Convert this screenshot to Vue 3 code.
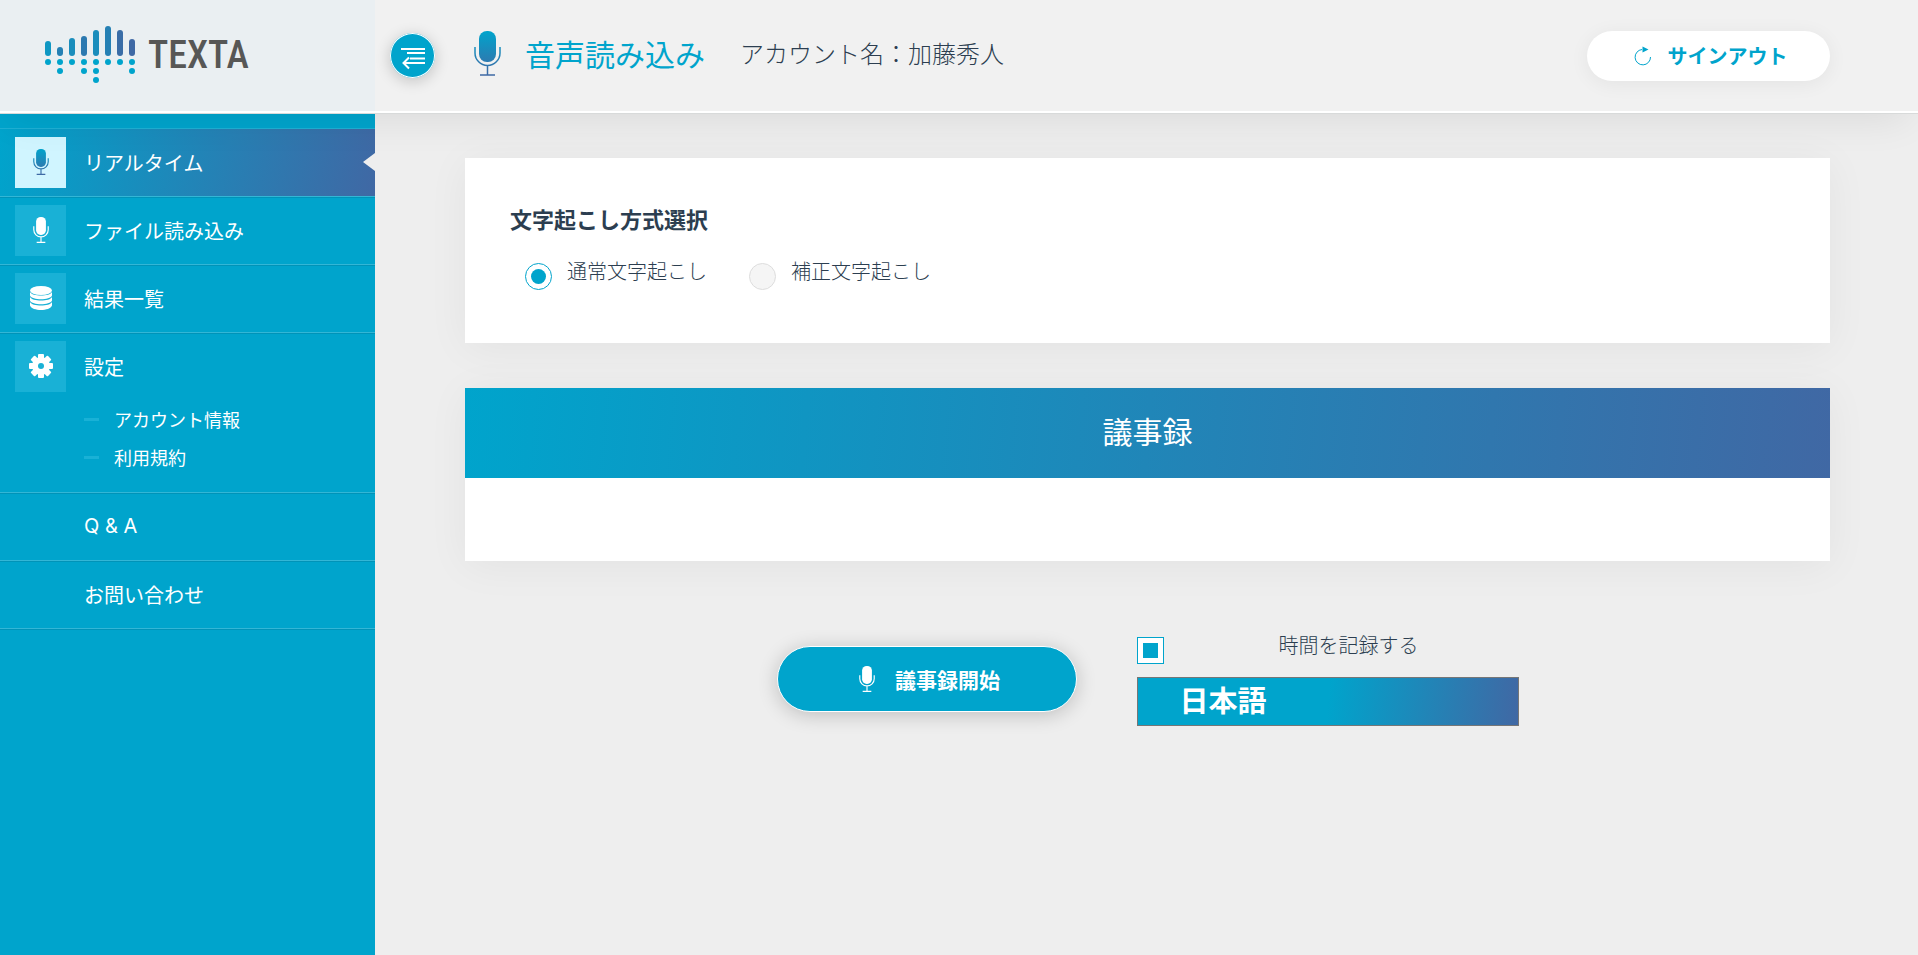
<script setup>
import { ref } from 'vue'

const method = ref('normal')
const recordTime = ref(true)
const language = ref('ja')

const bars = [
  { x: 0, top: 15, dots: 1, color: '#0f97c3' },
  { x: 12, top: 21, dots: 2, color: '#2580b4' },
  { x: 24, top: 12, dots: 1, color: '#1a8dbc' },
  { x: 36, top: 10, dots: 2, color: '#2c79b0' },
  { x: 48, top: 4, dots: 3, color: '#1a8dbc' },
  { x: 60, top: 0, dots: 1, color: '#2580b4' },
  { x: 72, top: 4, dots: 1, color: '#3a6da7' },
  { x: 84, top: 13, dots: 2, color: '#3f69a5' },
]

const nav = [
  { label: 'リアルタイム', icon: 'mic', active: true },
  { label: 'ファイル読み込み', icon: 'mic' },
  { label: '結果一覧', icon: 'database' },
  { label: '設定', icon: 'gear', children: ['アカウント情報', '利用規約'] },
  { label: 'Q & A' },
  { label: 'お問い合わせ' },
]
</script>

<template>
  <div class="app">
    <svg class="defs" aria-hidden="true">
      <defs>
        <linearGradient id="mic-fill" gradientUnits="userSpaceOnUse" x1="0" y1="0" x2="0" y2="45">
          <stop offset="0" stop-color="#00a4cc" />
          <stop offset="1" stop-color="#4068a4" />
        </linearGradient>
        <symbol id="mic" viewBox="0 0 27 45">
          <rect x="5" y="0" width="17" height="31" rx="8" stroke="none" />
          <path d="M1 16v6a12.5 12.5 0 0 0 25 0v-6M13.500 35v9M6 44h15" fill="none" />
        </symbol>
      </defs>
    </svg>

    <header class="header">
      <a class="brand" href="#" aria-label="TEXTA">
        <svg class="wave" viewBox="0 0 90 57" aria-hidden="true">
          <g v-for="bar in bars" :key="bar.x">
            <rect :x="bar.x" :y="bar.top" width="6" :height="30 - bar.top" rx="3" :fill="bar.color" />
            <circle v-for="n in bar.dots" :key="n" :cx="bar.x + 3" :cy="27 + n * 9" r="3" fill="#00a4cc" />
          </g>
        </svg>
        <span class="brand-name">TEXTA</span>
      </a>
      <button class="toggle" type="button" aria-label="メニュー">
        <svg viewBox="0 0 45 45" fill="none" stroke="#fff" stroke-width="2" aria-hidden="true">
          <path d="M11 16h24M17 20h18M20 25.500h15M14 30h21M19 24.500l-5.500 5.500 5.500 5.500" />
        </svg>
      </button>
      <div class="page-title">
        <svg class="mic-title" stroke="url(#mic-fill)" stroke-width="1.500" fill="url(#mic-fill)" aria-hidden="true"><use href="#mic" /></svg>
        <h1>音声読み込み</h1>
        <p class="account">アカウント名：加藤秀人</p>
      </div>
      <button class="signout" type="button">
        <svg viewBox="0 0 18 20" aria-hidden="true">
          <path d="M8 3.500A7.700 7.700 0 1 0 16.500 11" fill="none" stroke="#00a4cc" />
          <path d="M8.500 0.500L14.500 3.500L8.500 6.500Z" fill="#00a4cc" />
        </svg>
        サインアウト
      </button>
    </header>

    <div class="body">
      <nav class="sidebar">
        <ul class="menu">
          <li v-for="item in nav" :key="item.label" :class="{ active: item.active }">
            <a class="item" href="#">
              <span class="icon" :class="{ blank: !item.icon }">
                <svg v-if="item.icon === 'mic'" class="mic-small" :class="{ tinted: item.active }" aria-hidden="true"><use href="#mic" /></svg>
                <svg v-else-if="item.icon === 'database'" class="glyph" viewBox="0 0 24 24" fill="#fff" aria-hidden="true">
                  <ellipse cx="12" cy="4.500" rx="11" ry="4.500" />
                  <path d="M1 6C3 10.800 21 10.800 23 6V9.500C21 14.500 3 14.500 1 9.500Z" />
                  <path d="M1 11C3 15.800 21 15.800 23 11V14.500C21 19.500 3 19.500 1 14.500Z" />
                  <path d="M1 16C3 20.800 21 20.800 23 16V19.500C21 25.500 3 25.500 1 19.500Z" />
                </svg>
                <svg v-else-if="item.icon === 'gear'" class="glyph" viewBox="0 0 24 24" aria-hidden="true">
                  <g fill="#fff">
                    <rect v-for="n in 4" :key="n" x="9" y="0" width="6" height="24" rx="1" :transform="`rotate(${n * 45} 12 12)`" />
                  </g>
                  <circle cx="12" cy="12" r="9" fill="#fff" />
                  <circle cx="12" cy="12" r="3" fill="#19b1d6" />
                </svg>
              </span>
              {{ item.label }}
            </a>
            <ul v-if="item.children" class="submenu">
              <li v-for="child in item.children" :key="child"><a href="#">{{ child }}</a></li>
            </ul>
          </li>
        </ul>
      </nav>

      <main class="main">
        <section class="card method">
          <fieldset>
            <legend>文字起こし方式選択</legend>
            <div class="choices">
              <label class="choice">
                <input v-model="method" type="radio" name="method" value="normal" />
                <span>通常文字起こし</span>
              </label>
              <label class="choice">
                <input v-model="method" type="radio" name="method" value="corrected" />
                <span>補正文字起こし</span>
              </label>
            </div>
          </fieldset>
        </section>

        <section class="card minutes">
          <h2>議事録</h2>
          <div class="minutes-body"></div>
        </section>

        <div class="controls">
          <button class="start" type="button">
            <svg class="mic-small" aria-hidden="true"><use href="#mic" /></svg>
            議事録開始
          </button>
          <div class="options">
            <label class="choice record">
              <input v-model="recordTime" type="checkbox" />
              <span>時間を記録する</span>
            </label>
            <select v-model="language" aria-label="言語">
              <option value="ja">日本語</option>
              <option value="en">English</option>
            </select>
          </div>
        </div>
      </main>
    </div>
  </div>
</template>

<style>
body {
  margin: 0;
  background: #eee;
}
</style>

<style scoped>
* {
  box-sizing: border-box;
}

.app {
  display: flex;
  flex-direction: column;
  min-height: 100vh;
  color: #2c3e50;
  background: #eee;
  font-family: "Noto Sans CJK JP", sans-serif;
  font-size: 20px;
}

.defs {
  position: absolute;
  width: 0;
  height: 0;
}

h1,
h2,
p,
ul {
  margin: 0;
  padding: 0;
}

ul {
  list-style: none;
}

a {
  color: inherit;
  text-decoration: none;
}

button,
select {
  font-family: inherit;
  cursor: pointer;
}

.header {
  position: relative;
  z-index: 1;
  display: flex;
  align-items: center;
  height: 113px;
  padding-right: 88px;
  background: #f1f1f1;
  border-bottom: 2px solid #fff;
  box-shadow: 0 1px 0 #d8dada, 0 15px 40px -10px rgba(0, 0, 0, 0.09);
}

.brand {
  display: flex;
  align-items: center;
  align-self: stretch;
  gap: 13px;
  width: 375px;
  padding: 0 0 2px 45px;
  background: #eaeff2;
}

.wave {
  width: 90px;
  height: 57px;
}

.brand-name {
  color: #575756;
  font-family: "Roboto Condensed", "Liberation Sans", sans-serif;
  font-size: 38px;
  font-weight: 500;
  line-height: 44px;
}

.toggle {
  width: 45px;
  height: 45px;
  margin-left: 15px;
  padding: 0;
  background: #00a4cc;
  border: 0;
  border-radius: 50%;
  box-shadow: inset 0 0 0 1px #fff, 0 3px 15px rgba(0, 0, 0, 0.2);
}

.toggle svg {
  display: block;
}

.page-title {
  display: flex;
  align-items: center;
  gap: 24px;
  margin-left: 39px;
  padding-bottom: 5px;
}

.mic-title {
  width: 27px;
  height: 45px;
}

h1 {
  color: #00a4cc;
  font-size: 30px;
  font-weight: 400;
  line-height: 44px;
}

.account {
  margin-left: 11px;
  font-size: 24px;
  font-weight: 300;
  line-height: 36px;
}

.signout {
  display: flex;
  align-items: center;
  justify-content: center;
  gap: 16px;
  width: 243px;
  height: 50px;
  margin-left: auto;
  padding: 0 0 0 4px;
  color: #00a4cc;
  background: #fff;
  border: 0;
  border-radius: 25px;
  box-shadow: 0 3px 20px rgba(0, 0, 0, 0.06);
  font-size: 20px;
  font-weight: 700;
}

.signout svg {
  width: 18px;
  height: 20px;
}

.body {
  display: flex;
  flex: 1;
}

.sidebar {
  width: 375px;
  padding-top: 15px;
  color: #fff;
  background: #00a4cc;
}

.menu {
  border-top: 1px solid #1fb0d4;
  font-family: Inter, "Noto Sans CJK JP", sans-serif;
}

.menu > li {
  position: relative;
  border-bottom: 1px solid #33b6d6;
}

.menu > li + li {
  box-shadow: inset 0 1px 0 #0093b8;
}

.menu > li:last-child {
  box-shadow: inset 0 1px 0 #0093b8, 0 1px 0 #0093b8;
}

.item {
  display: flex;
  align-items: center;
  gap: 18px;
  height: 67px;
  padding: 0 0 1px 15px;
}

.icon {
  display: flex;
  align-items: center;
  justify-content: center;
  width: 51px;
  height: 51px;
  background: #19b1d6;
}

.icon.blank {
  background: none;
}

.menu > .active {
  background: linear-gradient(100deg, #00a4cc, #4068a4);
}

.active .icon {
  background: #d0f5ff;
}

.active::after {
  content: "";
  position: absolute;
  top: 24px;
  right: 0;
  width: 12px;
  height: 18px;
  background: #eee;
  clip-path: polygon(100% 0, 100% 100%, 0 50%);
}

.mic-small {
  width: 16px;
  height: 26px;
  fill: #fff;
  stroke: #fff;
  stroke-width: 2px;
}

.mic-small.tinted {
  fill: url(#mic-fill);
  stroke: url(#mic-fill);
}

.glyph {
  width: 24px;
  height: 24px;
}

.submenu {
  padding: 0 0 16px 84px;
  font-size: 18px;
}

.submenu a {
  display: flex;
  align-items: center;
  gap: 15px;
  height: 38px;
}

.submenu a::before {
  content: "";
  width: 15px;
  height: 3px;
  background: #19b1d6;
}

.main {
  flex: 1;
  padding: 45px 88px 45px 90px;
}

.card {
  background: #fff;
  box-shadow: 0 5px 40px rgba(0, 0, 0, 0.05);
}

.method {
  padding: 45px 45px 53px;
}

fieldset {
  min-width: 0;
  margin: 0;
  padding: 0;
  border: 0;
}

legend {
  padding: 0;
  font-size: 22px;
  font-weight: 700;
  line-height: 30px;
}

.choices {
  display: flex;
  gap: 42px;
  padding: 30px 15px 0;
}

.choice {
  display: flex;
  align-items: flex-start;
  gap: 15px;
  font-size: 20px;
  font-weight: 300;
  line-height: 16px;
}

.choice input {
  appearance: none;
  display: grid;
  place-items: center;
  flex: none;
  width: 27px;
  height: 27px;
  margin: 0;
  background: #f5f5f5;
  border: 1px solid #ddd;
}

.choice input[type="radio"],
.choice input[type="radio"]::before {
  border-radius: 50%;
}

.choice input:checked {
  background: #fff;
  border-color: #00a4cc;
}

.choice input:checked::before {
  content: "";
  width: 15px;
  height: 15px;
  background: #00a4cc;
}

.minutes {
  margin-top: 45px;
}

h2 {
  padding-bottom: 6px;
  color: #fff;
  background: linear-gradient(95deg, #00a4cc, #4068a4);
  font-size: 30px;
  font-weight: 400;
  line-height: 84px;
  text-align: center;
}

.minutes-body {
  min-height: 83px;
}

.controls {
  display: flex;
  align-items: center;
  justify-content: center;
  gap: 60px;
  margin-top: 70px;
}

.start {
  display: flex;
  align-items: center;
  justify-content: center;
  gap: 20px;
  width: 300px;
  height: 66px;
  padding: 0 0 0 6px;
  color: #fff;
  background: #00a4cc;
  border: 1px solid #fff;
  border-radius: 33px;
  box-shadow: 0 3px 20px rgba(0, 0, 0, 0.2);
  font-size: 21px;
  font-weight: 700;
}

.options {
  display: flex;
  flex-direction: column;
  gap: 13px;
  width: 382px;
  padding-top: 6px;
}

.record span {
  flex: 1;
  text-align: center;
}

select {
  appearance: none;
  width: 100%;
  height: 49px;
  padding: 0 42px 6px;
  color: #fff;
  background: linear-gradient(95deg, #00a4cc 50%, #4068a4);
  border: 1px solid #767676;
  border-radius: 0;
  font-size: 29px;
  font-weight: 700;
}

option {
  color: #2c3e50;
}
</style>
